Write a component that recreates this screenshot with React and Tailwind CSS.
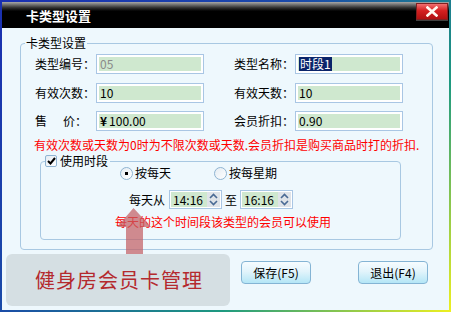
import React from 'react';

const font = "font-['Noto_Sans_CJK_SC','Noto_Sans',sans-serif]";

const Field = ({ children }) => (
  <div className="w-[108px] h-[20px] border border-[#a9c6e4] bg-white p-[2px]">
    <div className="h-full bg-[#cfe8cf] flex items-center pl-[1px] text-[12px] leading-none text-black">{children}</div>
  </div>
);

const Row = ({ label, children }) => (
  <div className="flex items-center">
    <div className="w-[61px] text-[12px] leading-none">{label}</div>
    {children}
  </div>
);

const Radio = ({ checked, label }) => (
  <div className="flex items-center gap-[2px]">
    <div className="w-[13px] h-[13px] rounded-full border border-[#8fb4d2] bg-[linear-gradient(135deg,#e4ecf2,#ffffff)] flex items-center justify-center">
      {checked && <div className="w-[3px] h-[3px] bg-black" />}
    </div>
    <span className="text-[12px] leading-none">{label}</span>
  </div>
);

const Spinner = () => (
  <div className="w-[13px] h-full bg-[#dfe3e8] flex flex-col items-center justify-center gap-[1px]">
    <svg width="9" height="6" viewBox="0 0 9 6"><path d="M1 5 L4.5 1.5 L8 5" fill="none" stroke="#4a6a94" strokeWidth="1.6" /></svg>
    <svg width="9" height="6" viewBox="0 0 9 6"><path d="M1 1 L4.5 4.5 L8 1" fill="none" stroke="#4a6a94" strokeWidth="1.6" /></svg>
  </div>
);

const TimeBox = ({ value }) => (
  <div className="w-[53px] h-[19px] border border-[#a9c6e4] bg-white p-[1px] flex">
    <div className="flex-1 bg-[#cfe8cf] flex items-center pl-[2px] text-[12px] leading-none">{value}</div>
    <Spinner />
  </div>
);

const Button = ({ children }) => (
  <button className="w-[70px] h-[23px] rounded-[4px] border border-[#84b4d4] bg-[linear-gradient(to_bottom,#f6fcff,#e2f4fb_45%,#b4e6f6)] text-[12px] leading-none text-black">
    {children}
  </button>
);

export default function App() {
  return (
    <div className={`relative w-[451px] h-[312px] p-[2px] bg-[linear-gradient(135deg,#1a2fb0_0%,#1a4aa8_40%,#1e9a80_70%,#eef020_100%)] ${font}`}>
      <div className="flex flex-col h-full">
        {/* title bar */}
        <div className="h-[26px] flex items-start justify-between bg-[linear-gradient(to_bottom,#a8a8a8,#303030_22%,#000_35%)]">
          <div className="h-full flex items-center pl-[24px] text-white text-[13px] font-bold leading-none">卡类型设置</div>
          <div className="mt-[1px] mr-[1px] flex flex-col">
            <div className="w-[32px] h-[17px] bg-[linear-gradient(to_bottom,#f07070,#d42020_45%,#b01010)] flex items-center justify-center border border-[#802020]">
              <svg width="12" height="11" viewBox="0 0 12 11"><path d="M1.5 1.5 L10.5 9.5 M10.5 1.5 L1.5 9.5" stroke="#fff8f0" strokeWidth="2.6" strokeLinecap="square" /></svg>
            </div>
            <div className="h-[1px] bg-[#404040]" />
          </div>
        </div>

        {/* client */}
        <div className="flex-1 bg-[#eef8fd] text-black">
          <fieldset className="ml-[18px] mt-[7px] w-[413px] border border-[#a8c8e2] rounded-[4px] p-0">
            <legend className="ml-[4px] px-[1px] text-[12px] leading-[16px]">卡类型设置</legend>
            <div className="pl-[14px] pt-[3px] pb-[9px]">
              <div className="flex flex-col gap-[8.5px]">
                <div className="flex">
                  <Row label="类型编号："><Field><span className="text-[#8a8a8a]">05</span></Field></Row>
                  <div className="ml-[30px]">
                    <Row label="类型名称："><Field><span className="bg-[#0a246a] text-white px-[1px] py-[1px]">时段1</span></Field></Row>
                  </div>
                </div>
                <div className="flex">
                  <Row label="有效次数："><Field>10</Field></Row>
                  <div className="ml-[30px]">
                    <Row label="有效天数："><Field>10</Field></Row>
                  </div>
                </div>
                <div className="flex">
                  <Row label={<><span>售</span><span className="ml-[16px]">价：</span></>}><Field><span className="font-bold mr-[2px]">¥</span>100.00</Field></Row>
                  <div className="ml-[30px]">
                    <Row label="会员折扣："><Field>0.90</Field></Row>
                  </div>
                </div>
              </div>
              <div className="mt-[6px] text-[12px] leading-[16px] text-[#ff0000] whitespace-nowrap -ml-[1px]">
                有效次数或天数为0时为不限次数或天数.会员折扣是购买商品时打的折扣.
              </div>

              <fieldset className="ml-[5px] mt-[1px] w-[361px] border border-[#a8c8e2] rounded-[4px] p-0">
                <legend className="ml-[4px] pr-[2px] flex items-center gap-[3px] text-[12px] leading-[14px]">
                  <span className="w-[12px] h-[12px] border border-[#8fb4d2] rounded-[2px] bg-[linear-gradient(135deg,#e4ecf2,#ffffff)] flex items-center justify-center">
                    <svg width="9" height="8" viewBox="0 0 9 8"><path d="M1 4 L3.5 6.5 L8 1" fill="none" stroke="#000" strokeWidth="2" /></svg>
                  </span>
                  使用时段
                </legend>
                <div className="pb-[9px]">
                  <div className="flex items-center h-[14px] -mt-[2px] pl-[79px]">
                    <Radio checked label="按每天" />
                    <div className="ml-[43px]"><Radio label="按每星期" /></div>
                  </div>
                  <div className="flex items-center mt-[10px] pl-[88px]">
                    <span className="text-[12px] leading-none">每天从</span>
                    <div className="ml-[4px]"><TimeBox value="14:16" /></div>
                    <span className="mx-[2px] text-[12px] leading-none w-[14px] text-center">至</span>
                    <TimeBox value="16:16" />
                  </div>
                  <div className="mt-[5px] pl-[74px] text-[12px] leading-[16px] text-[#ff0000]">每天的这个时间段该类型的会员可以使用</div>
                </div>
              </fieldset>
            </div>
          </fieldset>

          <div className="flex gap-[47px] pl-[239px] mt-[11px]">
            <Button>保存(F5)</Button>
            <Button>退出(F4)</Button>
          </div>
        </div>
      </div>

      {/* overlay arrow */}
      <svg className="absolute left-[116px] top-[208px]" width="36" height="47" viewBox="0 0 36 47">
        <path d="M17.5 0 L35 19 L27 19 L27 47 L10 47 L10 19 L1 19 Z" fill="rgba(196,96,100,0.72)" />
      </svg>

      {/* overlay caption */}
      <div className="absolute left-[6px] top-[254px] w-[224px] h-[52px] rounded-[6px] bg-[#d5dfe3] flex items-center pl-[29px]">
        <span className="text-[20px] leading-none tracking-[1px] text-[#b42a2e]">健身房会员卡管理</span>
      </div>
    </div>
  );
}
